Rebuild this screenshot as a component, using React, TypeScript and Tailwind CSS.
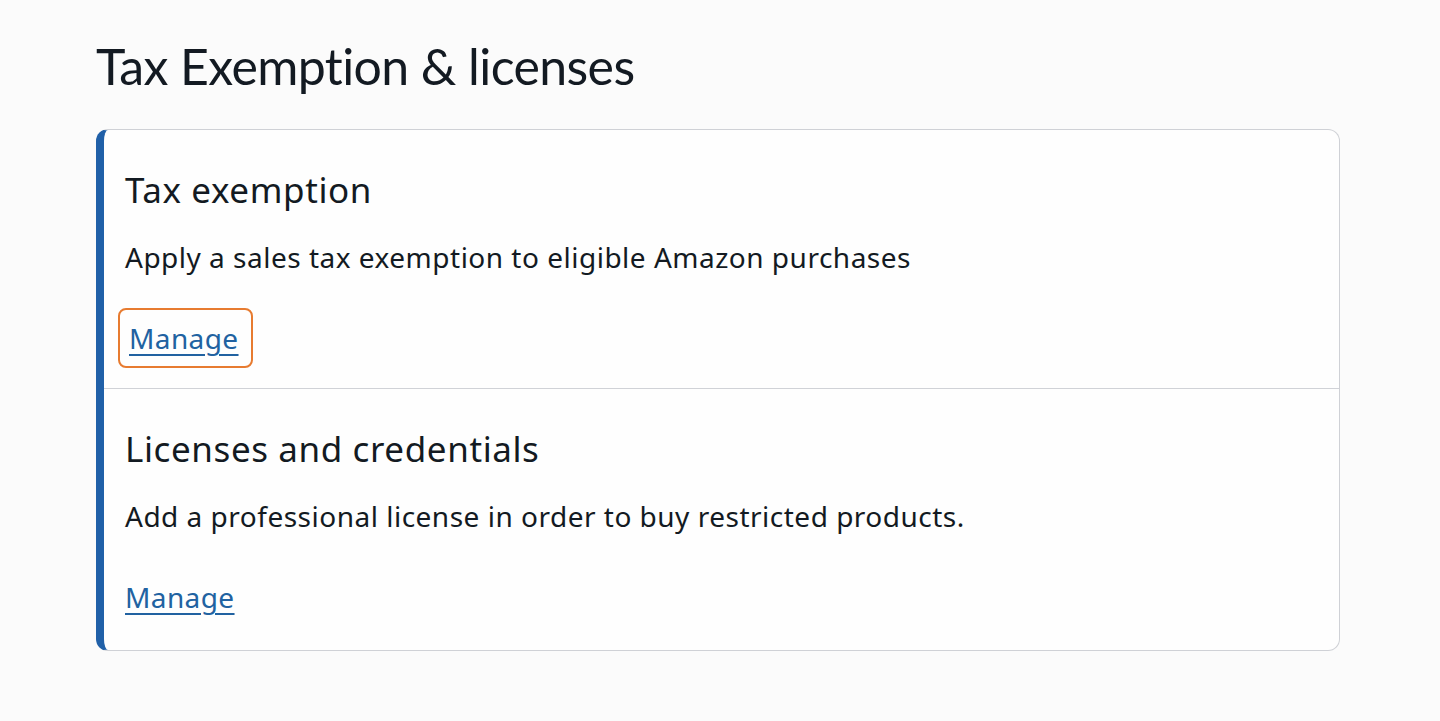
import React from 'react';

type Section = {
  title: string;
  description: string;
  focused?: boolean;
};

const sections: Section[] = [
  {
    title: 'Tax exemption',
    description: 'Apply a sales tax exemption to eligible Amazon purchases',
    focused: true,
  },
  {
    title: 'Licenses and credentials',
    description: 'Add a professional license in order to buy restricted products.',
  },
];

const ManageLink: React.FC<{ focused?: boolean }> = ({ focused }) => (
  <a
    href="#"
    onClick={e => e.preventDefault()}
    className={
      focused
        ? 'inline-block -ml-[7px] pl-[9px] pr-[12px] py-[6px] rounded-[8px] border-2 border-[#e77b30] text-[#2162a1] underline underline-offset-[5px] decoration-[2px] text-[28px] tracking-[0.4px] leading-[44px]'
        : 'inline-block text-[#2162a1] underline underline-offset-[5px] decoration-[2px] text-[28px] tracking-[0.4px] leading-[44px]'
    }
  >
    Manage
  </a>
);

const App: React.FC = () => {
  return (
    <div className="min-h-screen bg-[#fbfbfb] pl-[96px] pr-[100px] pt-[36px] font-['Noto_Sans',sans-serif] text-[#131a22]">
      <h1 className="font-['Lato',sans-serif] text-[50px] leading-[60px] tracking-[-0.6px]">
        Tax Exemption &amp; licenses
      </h1>

      <div className="mt-[33px] w-[1244px] rounded-[12px] border-[1.5px] border-[#cfd1d6] border-l-[8px] border-l-[#2060a8] bg-[#fefefe]">
        {sections.map((s, i) => (
          <div
            key={s.title}
            className={
              i === 0
                ? 'pl-[21px] pt-[38px] pb-[20px] border-b-[1.5px] border-[#d0d2d7]'
                : 'pl-[21px] pt-[38px] pb-[31px]'
            }
          >
            <h2 className="text-[35px] tracking-[0.6px] leading-[44px]">{s.title}</h2>
            <p className="mt-[27px] text-[28px] tracking-[0.5px] leading-[36px]">{s.description}</p>
            <div className={i === 0 ? 'mt-[33px]' : 'mt-[41px]'}>
              <ManageLink focused={s.focused} />
            </div>
          </div>
        ))}
      </div>
    </div>
  );
};

export default App;
